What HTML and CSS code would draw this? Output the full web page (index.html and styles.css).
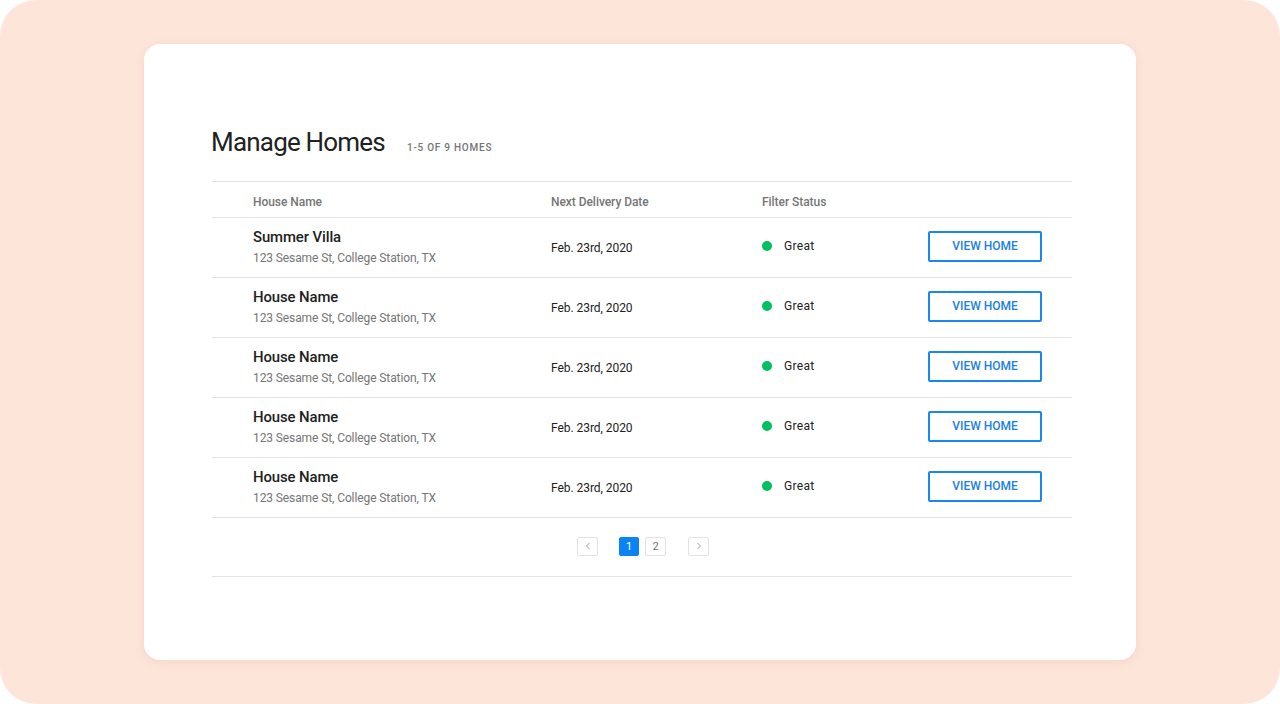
FILE: index.html
```html
<!DOCTYPE html>
<html>
<head>
<meta charset="utf-8">
<link rel="stylesheet" href="styles.css">
</head>
<body>
<div class="frame">
  <div class="card">
    <div class="heading">
      <h1 class="title">Manage Homes</h1>
      <span class="count">1-5 OF 9 HOMES</span>
    </div>
    <div class="table">
      <div class="row head">
        <div>House Name</div>
        <div>Next Delivery Date</div>
        <div>Filter Status</div>
        <div></div>
      </div>
      <div class="row item">
        <div class="house"><div class="name">Summer Villa</div><div class="addr">123 Sesame St, College Station, TX</div></div>
        <div class="date">Feb. 23rd, 2020</div>
        <div class="status"><span class="dot"></span>Great</div>
        <div><button class="btn">VIEW HOME</button></div>
      </div>
      <div class="row item">
        <div class="house"><div class="name">House Name</div><div class="addr">123 Sesame St, College Station, TX</div></div>
        <div class="date">Feb. 23rd, 2020</div>
        <div class="status"><span class="dot"></span>Great</div>
        <div><button class="btn">VIEW HOME</button></div>
      </div>
      <div class="row item">
        <div class="house"><div class="name">House Name</div><div class="addr">123 Sesame St, College Station, TX</div></div>
        <div class="date">Feb. 23rd, 2020</div>
        <div class="status"><span class="dot"></span>Great</div>
        <div><button class="btn">VIEW HOME</button></div>
      </div>
      <div class="row item">
        <div class="house"><div class="name">House Name</div><div class="addr">123 Sesame St, College Station, TX</div></div>
        <div class="date">Feb. 23rd, 2020</div>
        <div class="status"><span class="dot"></span>Great</div>
        <div><button class="btn">VIEW HOME</button></div>
      </div>
      <div class="row item">
        <div class="house"><div class="name">House Name</div><div class="addr">123 Sesame St, College Station, TX</div></div>
        <div class="date">Feb. 23rd, 2020</div>
        <div class="status"><span class="dot"></span>Great</div>
        <div><button class="btn">VIEW HOME</button></div>
      </div>
      <div class="pager">
        <span class="pg arrow"><svg width="6" height="8" viewBox="0 0 6 8"><path d="M4.5 1 L1.5 4 L4.5 7" fill="none" stroke="#9e9e9e" stroke-width="1"/></svg></span>
        <span class="pg active first">1</span>
        <span class="pg">2</span>
        <span class="pg arrow last"><svg width="6" height="8" viewBox="0 0 6 8"><path d="M1.5 1 L4.5 4 L1.5 7" fill="none" stroke="#9e9e9e" stroke-width="1"/></svg></span>
      </div>
    </div>
  </div>
</div>
</body>
</html>
```

FILE: styles.css
```css
* { box-sizing: border-box; }
html, body { margin: 0; padding: 0; background: #ffffff; }
body { font-family: Roboto, "Liberation Sans", Arial, sans-serif; }

.frame {
  width: 1280px;
  height: 704px;
  background: #fde5d9;
  border-radius: 36px;
  padding: 44px 144px;
}

.card {
  width: 992px;
  height: 616px;
  background: #ffffff;
  border-radius: 16px;
  box-shadow: 0 2px 10px rgba(200, 150, 130, 0.18);
  padding: 80px 64px 0 67px;
}

.heading {
  display: flex;
  align-items: baseline;
  height: 38px;
  margin-bottom: 19px;
}

.title {
  margin: 0;
  font-size: 26px;
  line-height: 36px;
  font-weight: 400;
  letter-spacing: -0.8px;
  color: #212121;
}

.count {
  margin-left: 22px;
  font-size: 10px;
  font-weight: 500;
  letter-spacing: 0.75px;
  color: #757575;
}

.table {
  margin-left: 1px;
  width: 860px;
  border-top: 1px solid #e3e3e3;
}

.row {
  display: grid;
  grid-template-columns: 298px 211px 166px 114px;
  padding-left: 41px;
  align-items: center;
  border-bottom: 1px solid #e3e3e3;
}

.head {
  height: 36px;
  font-size: 12px;
  font-weight: 500;
  color: #757575;
  padding-top: 4px;
  letter-spacing: -0.05px;
}

.item { height: 60px; }

.house { margin-top: -2px; }

.name {
  font-size: 14.9px;
  line-height: 20px;
  font-weight: 500;
  color: #212121;
  letter-spacing: -0.1px;
}

.addr {
  margin-top: 2px;
  font-size: 12px;
  line-height: 18px;
  color: #757575;
  letter-spacing: -0.1px;
}

.date {
  font-size: 12px;
  color: #212121;
  letter-spacing: -0.05px;
}

.status {
  display: flex;
  align-items: center;
  font-size: 12px;
  color: #212121;
  letter-spacing: 0.3px;
  margin-top: -3px;
}

.dot {
  width: 10px;
  height: 10px;
  border-radius: 50%;
  background: #00c060;
  margin-right: 12px;
}

.btn {
  display: block;
  width: 114px;
  height: 31px;
  margin-top: -3px;
  border: 2px solid #1a86f0;
  border-radius: 2px;
  background: #ffffff;
  color: #1a7fe6;
  font-family: Roboto, "Liberation Sans", Arial, sans-serif;
  font-size: 12px;
  font-weight: 500;
  padding: 0;
}

.pager {
  height: 59px;
  display: flex;
  justify-content: center;
  align-items: center;
  border-bottom: 1px solid #e3e3e3;
  gap: 6px;
  padding-left: 2px;
  padding-bottom: 2px;
}

.pg {
  width: 21px;
  height: 19px;
  border: 1px solid #e3e3e3;
  border-radius: 2px;
  display: flex;
  align-items: center;
  justify-content: center;
  font-size: 11px;
  color: #757575;
}

.pg.active {
  width: 20px;
  background: #0a84f5;
  border-color: #0a84f5;
  color: #ffffff;
}

.first { margin-left: 15px; }
.last { margin-left: 16px; }
```
